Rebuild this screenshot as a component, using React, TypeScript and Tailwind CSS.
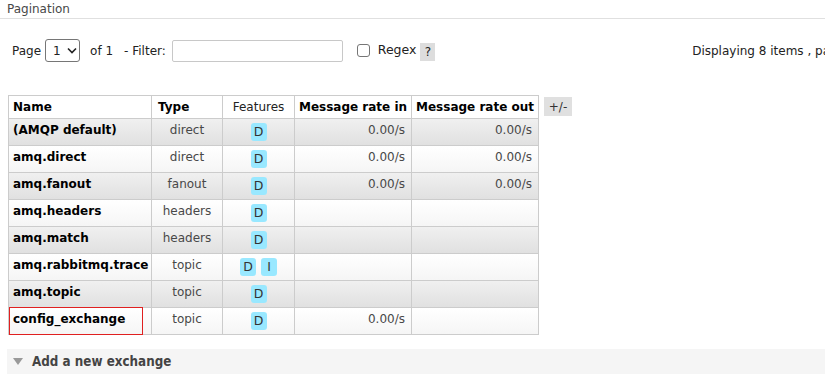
import React from "react";

const rows = [
  { name: "(AMQP default)", type: "direct", f: ["D"], rin: "0.00/s", rout: "0.00/s" },
  { name: "amq.direct", type: "direct", f: ["D"], rin: "0.00/s", rout: "0.00/s" },
  { name: "amq.fanout", type: "fanout", f: ["D"], rin: "0.00/s", rout: "0.00/s" },
  { name: "amq.headers", type: "headers", f: ["D"], rin: "", rout: "" },
  { name: "amq.match", type: "headers", f: ["D"], rin: "", rout: "" },
  { name: "amq.rabbitmq.trace", type: "topic", f: ["D", "I"], rin: "", rout: "" },
  { name: "amq.topic", type: "topic", f: ["D"], rin: "", rout: "" },
  { name: "config_exchange", type: "topic", f: ["D"], rin: "0.00/s", rout: "" },
];

export default function App() {
  return (
    <div
      className="w-[825px] h-[385px] overflow-hidden bg-white text-[12px] text-[#484848]"
      style={{ fontFamily: '"DejaVu Sans", Verdana, sans-serif' }}
    >
      <div className="pl-[7px] pt-[2px] h-[19px] text-[12px] text-[#484848] border-b border-[#e0e0e0] leading-[15px]">
        Pagination
      </div>
      <div className="flex items-center h-[23px] mt-[20px] pl-[12px] whitespace-nowrap text-[#222]">
        <span>Page</span>
        <div className="ml-[4px] w-[35px] h-[23px] border border-[#767676] rounded-[3px] flex items-center pl-[7px] gap-[6px]">
          <span>1</span>
          <svg width="10" height="7" viewBox="0 0 10 7">
            <path d="M1 1.5 L5 5.5 L9 1.5" fill="none" stroke="#222" strokeWidth="1.6" />
          </svg>
        </div>
        <span className="ml-[10px]">of 1</span>
        <span className="ml-[11px]">- Filter:</span>
        <div className="ml-[6px] w-[171px] h-[22px] border border-[#c8c8c8] rounded-[2px]" />
        <div className="ml-[14px] w-[13px] h-[13px] border border-[#767676] rounded-[3px]" />
        <span className="ml-[8px] text-[12.5px]">Regex</span>
        <span className="ml-[4px] mt-[3px] w-[15px] h-[18px] bg-[#dddddd] flex items-center justify-center text-[12px]">?</span>
        <span className="ml-auto -mr-[20px] pl-[250px]">Displaying 8 items , page</span>
      </div>
      <div className="flex mt-[33px] pl-[8px] items-start">
        <table className="border-collapse text-[12px]">
          <thead>
            <tr className="h-[23px] bg-white">
              <th className="w-[143px] border border-[#cccccc] text-left pl-[4px] font-bold text-black">Name</th>
              <th className="w-[71px] border border-[#cccccc] text-left pl-[6px] font-bold text-black">Type</th>
              <th className="w-[72px] border border-[#cccccc] text-center font-normal text-[#222]">Features</th>
              <th className="w-[117px] border border-[#cccccc] text-center font-bold text-black">Message rate in</th>
              <th className="w-[127px] border border-[#cccccc] text-center font-bold text-black">Message rate out</th>
            </tr>
          </thead>
          <tbody>
            {rows.map((r, i) => {
              const bg = i % 2 === 0
                ? "bg-gradient-to-b from-[#f0f0f0] to-[#e0e0e0]"
                : "bg-gradient-to-b from-[#ffffff] to-[#f5f5f5]";
              return (
                <tr key={r.name} className={`h-[27px] ${bg}`}>
                  <td className="border border-[#cccccc] pl-[4px] pt-[2px] align-top font-bold text-black relative">
                    {r.name}
                    {i === 7 && (
                      <div className="absolute left-[0px] top-[-1px] w-[134px] h-[28px] border border-[#e02020]" />
                    )}
                  </td>
                  <td className="border border-[#cccccc] text-center pt-[2px] align-top">{r.type}</td>
                  <td className="border border-[#cccccc] text-center pt-[4px] align-top">
                    <div className="flex justify-center gap-[5px]">
                      {r.f.map((f) => (
                        <span key={f} className="w-[16px] h-[18px] rounded-[3px] bg-[#99e8ff] text-[#333] flex items-center justify-center text-[12.5px] leading-none">
                          {f}
                        </span>
                      ))}
                    </div>
                  </td>
                  <td className="border border-[#cccccc] text-right pr-[6px] pt-[2px] align-top">{r.rin}</td>
                  <td className="border border-[#cccccc] text-right pr-[6px] pt-[2px] align-top">{r.rout}</td>
                </tr>
              );
            })}
          </tbody>
        </table>
        <span className="ml-[5px] mt-[2px] w-[28px] h-[19px] bg-[#e0e0e0] flex items-center justify-center text-[#333]">+/-</span>
      </div>
      <div className="ml-[7px] mt-[14px] h-[25px] bg-[#f5f5f5] flex items-center pl-[6px]">
        <svg width="10" height="7" viewBox="0 0 10 7">
          <path d="M0 0 L10 0 L5 7 Z" fill="#999" />
        </svg>
        <span
          className="ml-[9px] font-bold text-[13.3px] text-[#444]"
          style={{ fontFamily: '"DejaVu Sans Condensed", "Liberation Sans Narrow", "DejaVu Sans", sans-serif', fontStretch: "condensed" }}
        >
          Add a new exchange
        </span>
      </div>
    </div>
  );
}
